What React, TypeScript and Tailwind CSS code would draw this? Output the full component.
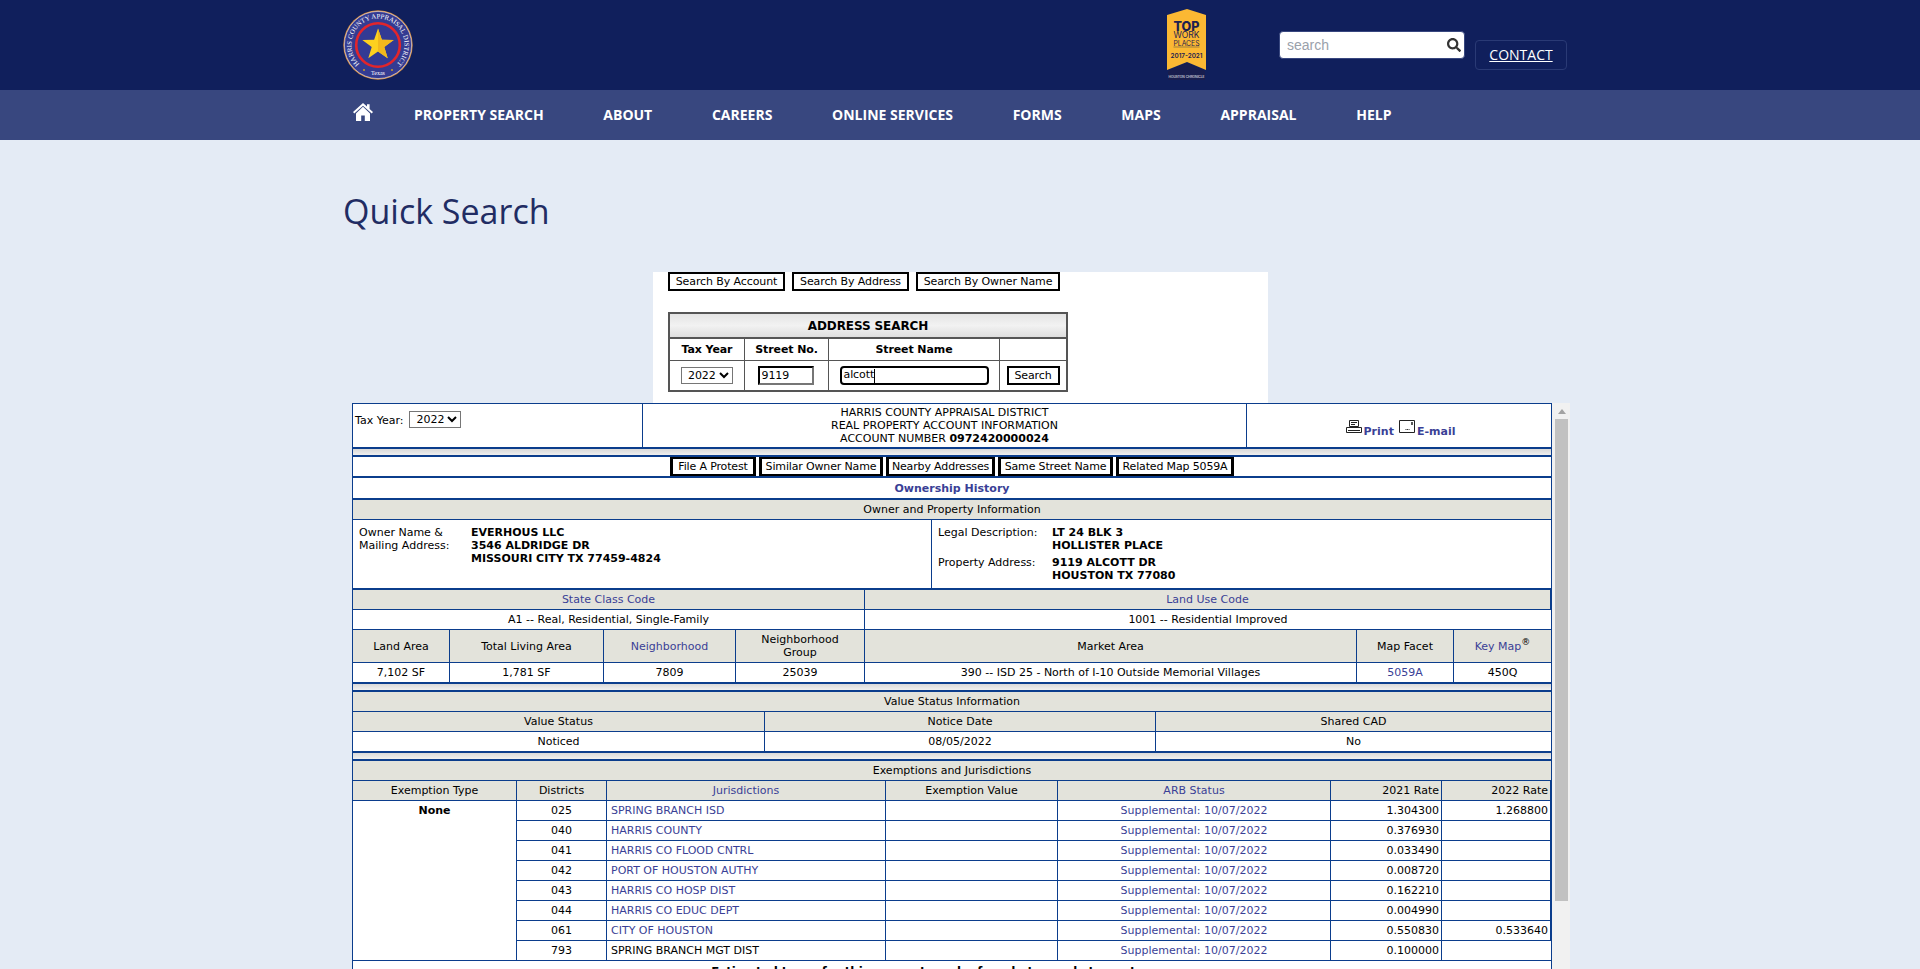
import * as React from "react"
import { FaSearch } from "react-icons/fa"

const navItems = ["PROPERTY SEARCH", "ABOUT", "CAREERS", "ONLINE SERVICES", "FORMS", "MAPS", "APPRAISAL", "HELP"]

const jurisdictions = [
  { id: "025", name: "SPRING BRANCH ISD", r21: "1.304300", r22: "1.268800", link: true },
  { id: "040", name: "HARRIS COUNTY", r21: "0.376930", r22: "", link: true },
  { id: "041", name: "HARRIS CO FLOOD CNTRL", r21: "0.033490", r22: "", link: true },
  { id: "042", name: "PORT OF HOUSTON AUTHY", r21: "0.008720", r22: "", link: true },
  { id: "043", name: "HARRIS CO HOSP DIST", r21: "0.162210", r22: "", link: true },
  { id: "044", name: "HARRIS CO EDUC DEPT", r21: "0.004990", r22: "", link: true },
  { id: "061", name: "CITY OF HOUSTON", r21: "0.550830", r22: "0.533640", link: true },
  { id: "793", name: "SPRING BRANCH MGT DIST", r21: "0.100000", r22: "", link: false },
]

function Logo() {
  return (
    <svg viewBox="0 0 70 70" className="h-[70px] w-[70px]">
      <circle cx="35" cy="35" r="34.7" fill="#d98a3a" />
      <circle cx="35" cy="35" r="33.6" fill="#343b92" stroke="#dfe3f2" strokeWidth="0.6" />
      <circle cx="35" cy="35" r="21.8" fill="#323a94" stroke="#e2252b" strokeWidth="2.6" />
      <path
        d="M35 18.5L38.88 29.66L50.69 29.9L41.28 37.04L44.7 48.35L35 41.6L25.3 48.35L28.72 37.04L19.31 29.9L31.12 29.66Z"
        fill="#fdd01f"
      />
      <path d="M35 18.5V41.6L44.7 48.35L41.28 37.04L50.69 29.9L38.88 29.66Z" fill="#f2b81c" />
      <defs>
        <path id="sealArc" d="M16.3 53.7A26.5 26.5 0 1 1 53.7 53.700" />
      </defs>
      <text fontFamily="'Liberation Serif', serif" fontSize="6.8" fill="#ffffff">
        <textPath href="#sealArc" startOffset="50%" textAnchor="middle">
          HARRIS COUNTY APPRAISAL DISTRICT
        </textPath>
      </text>
      <text x="35" y="64.500" textAnchor="middle" fontFamily="'Liberation Serif', serif" fontSize="6" fill="#ffffff">
        Texas
      </text>
      <circle cx="21" cy="60" r="1" fill="#c9a227" />
      <circle cx="49" cy="60" r="1" fill="#c9a227" />
    </svg>
  )
}

function Badge() {
  return (
    <svg viewBox="0 0 40 71" className="h-[71px] w-[40px]">
      <path d="M0 6L20 0L39 6V61L20 53L0 61Z" fill="#fbb833" />
      <path d="M1 62L20 54L38 62V71H1Z" fill="#181d4e" />
      <text x="19.5" y="21.600" textAnchor="middle" textLength="26" lengthAdjust="spacingAndGlyphs" fontFamily="Inter, sans-serif" fontWeight="800" fontSize="12.5" fill="#1c2150">
        TOP
      </text>
      <text x="19.5" y="29.300" textAnchor="middle" textLength="26" lengthAdjust="spacingAndGlyphs" fontFamily="Inter, sans-serif" fontSize="8.300" fill="#1c2150">
        WORK
      </text>
      <text x="19.5" y="36.500" textAnchor="middle" textLength="26" lengthAdjust="spacingAndGlyphs" fontFamily="Inter, sans-serif" fontSize="7" fill="#1c2150">
        PLACES
      </text>
      <rect x="6.5" y="37.600" width="26" height="0.800" fill="#8a7440" />
      <text x="19.5" y="49" textAnchor="middle" textLength="32" lengthAdjust="spacingAndGlyphs" fontFamily="Inter, sans-serif" fontSize="6.500" fontWeight="600" fill="#1c2150">
        2017-2021
      </text>
      <text x="19.5" y="69" textAnchor="middle" textLength="36" lengthAdjust="spacingAndGlyphs" fontFamily="Inter, sans-serif" fontSize="3.600" fill="#ffffff">
        HOUSTON CHRONICLE
      </text>
    </svg>
  )
}

function HomeIcon() {
  return (
    <svg viewBox="0 0 20 18" className="h-[18px] w-[20px]" fill="#ffffff">
      <path d="M10 0L14 3.600V1.200H16.600V6L20 9L18.700 10.400L10 2.800L1.300 10.400L0 9Z" />
      <path d="M3 10.400L10 3.800L17 10.400V18H11.800V12.500H8.200V18H3Z" />
    </svg>
  )
}

function PrintIcon() {
  return (
    <svg viewBox="0 0 17 14" className="h-[14px] w-[17px]" fill="none" stroke="#222222" strokeWidth="1">
      <path d="M3.500 .5h9v6h-9z" />
      <path d="M5 2.500h6M5 4.500h4" />
      <path d="M.5 7.500h15v5h-15z" />
      <path d="M2 10.500h12" />
    </svg>
  )
}

function MailIcon() {
  return (
    <svg viewBox="0 0 17 14" className="h-[14px] w-[17px]" fill="none" stroke="#222222" strokeWidth="1">
      <path d="M.5 .5h15v12h-15z" />
      <path d="M6.500 9.500h4" strokeDasharray="1 .6" />
      <path d="M13 2v3" strokeWidth="1.500" />
    </svg>
  )
}

function Cell({ children, className = "" }: { children?: React.ReactNode; className?: string }) {
  return (
    <div className={`flex items-center justify-center border-r border-b border-[#0b3d8c] last:border-r-0 ${className}`}>
      {children}
    </div>
  )
}

function Head({ children, link }: { children: React.ReactNode; link?: boolean }) {
  return <Cell className={`bg-[#e3e3db] ${link ? "text-[#3a3f96]" : ""}`}>{children}</Cell>
}

function SectionTitle({ children }: { children: React.ReactNode }) {
  return (
    <div className="flex h-[20px] items-center justify-center border-b border-[#0b3d8c] bg-[#e3e3db]">{children}</div>
  )
}

function Gap() {
  return <div className="h-[6px] bg-gradient-to-b from-[#d9d9d9] to-[#efefef]" />
}

function LinkButton({ children, className }: { children: React.ReactNode; className: string }) {
  return (
    <button
      className={`flex h-[19px] items-center justify-center border-[3px] border-y-2 border-black bg-white text-[11px] leading-none tracking-[-0.15px] text-black ${className}`}
    >
      {children}
    </button>
  )
}

function AccountDetail() {
  return (
    <div className="w-[1200px] border-x border-t border-[#0b3d8c] bg-white text-[11px] leading-[13px] text-black">
      <div className="grid h-[45px] grid-cols-[290px_604px_304px] border-b-2 border-[#0b3d8c]">
        <div className="flex items-start gap-[6px] border-r border-[#0b3d8c] pt-[7px] pl-[2px]">
          <span className="mt-[3px]">Tax Year:</span>
          <select
            defaultValue="2022"
            className="h-[17px] w-[52px] border border-[#767676] bg-white pl-[2px] text-[11px] leading-none"
          >
            <option>2022</option>
          </select>
        </div>
        <div className="flex flex-col items-center justify-center border-r border-[#0b3d8c] text-center">
          <span>HARRIS COUNTY APPRAISAL DISTRICT</span>
          <span>REAL PROPERTY ACCOUNT INFORMATION</span>
          <span>
            ACCOUNT NUMBER <b>0972420000024</b>
          </span>
        </div>
        <div className="flex items-center justify-center gap-[5px] pt-[2px] pl-[3px] font-bold text-[#3a3f96]">
          <span className="flex items-end gap-[1px]">
            <PrintIcon />
            <span className="translate-y-[4px]">Print</span>
          </span>
          <span className="flex items-end gap-[1px]">
            <MailIcon />
            <span className="translate-y-[4px]">E-mail</span>
          </span>
        </div>
      </div>
      <Gap />
      <div className="flex h-[23px] items-center justify-center gap-[3px] border-y-2 border-[#0b3d8c]">
        <LinkButton className="w-[86px]">File A Protest</LinkButton>
        <LinkButton className="w-[124px]">Similar Owner Name</LinkButton>
        <LinkButton className="w-[109px]">Nearby Addresses</LinkButton>
        <LinkButton className="w-[115px]">Same Street Name</LinkButton>
        <LinkButton className="w-[118px]">Related Map 5059A</LinkButton>
      </div>
      <div className="flex h-[22px] items-center justify-center border-b-2 border-[#0b3d8c] font-bold text-[#3a3f96]">
        Ownership History
      </div>
      <SectionTitle>Owner and Property Information</SectionTitle>
      <div className="grid h-[70px] grid-cols-[579px_619px] border-b-2 border-[#0b3d8c]">
        <div className="flex border-r border-[#0b3d8c] pt-[6px] pl-[6px]">
          <div className="w-[112px]">
            Owner Name &amp;
            <br />
            Mailing Address:
          </div>
          <div className="font-bold">
            EVERHOUS LLC
            <br />
            3546 ALDRIDGE DR
            <br />
            MISSOURI CITY TX 77459-4824
          </div>
        </div>
        <div className="flex pt-[6px] pl-[6px]">
          <div className="w-[114px]">
            <div className="h-[30px]">Legal Description:</div>
            <div>Property Address:</div>
          </div>
          <div className="font-bold">
            <div className="h-[30px]">
              LT 24 BLK 3
              <br />
              HOLLISTER PLACE
            </div>
            <div>
              9119 ALCOTT DR
              <br />
              HOUSTON TX 77080
            </div>
          </div>
        </div>
      </div>
      <div className="grid auto-rows-[20px] grid-cols-[512px_686px]">
        <Head link>State Class Code</Head>
        <Head link>Land Use Code</Head>
        <Cell>A1 -- Real, Residential, Single-Family</Cell>
        <Cell>1001 -- Residential Improved</Cell>
      </div>
      <div className="grid h-[33px] grid-cols-[97px_154px_132px_129px_492px_97px_97px]">
        <Head>Land Area</Head>
        <Head>Total Living Area</Head>
        <Head link>Neighborhood</Head>
        <Head>
          <span className="text-center">
            Neighborhood
            <br />
            Group
          </span>
        </Head>
        <Head>Market Area</Head>
        <Head>Map Facet</Head>
        <Head link>
          <span>
            Key Map<sup className="text-[9px] text-black">®</sup>
          </span>
        </Head>
      </div>
      <div className="grid h-[21px] grid-cols-[97px_154px_132px_129px_492px_97px_97px] border-b-2 border-[#0b3d8c] [&>div]:border-b-0">
        <Cell>7,102 SF</Cell>
        <Cell>1,781 SF</Cell>
        <Cell>7809</Cell>
        <Cell>25039</Cell>
        <Cell>390 -- ISD 25 - North of I-10 Outside Memorial Villages</Cell>
        <Cell className="text-[#3a3f96]">5059A</Cell>
        <Cell>450Q</Cell>
      </div>
      <Gap />
      <div className="border-t-2 border-[#0b3d8c]">
        <SectionTitle>Value Status Information</SectionTitle>
      </div>
      <div className="grid h-[20px] grid-cols-[412px_391px_395px]">
        <Head>Value Status</Head>
        <Head>Notice Date</Head>
        <Head>Shared CAD</Head>
      </div>
      <div className="grid h-[21px] grid-cols-[412px_391px_395px] border-b-2 border-[#0b3d8c] [&>div]:border-b-0">
        <Cell>Noticed</Cell>
        <Cell>08/05/2022</Cell>
        <Cell>No</Cell>
      </div>
      <Gap />
      <div className="border-t-2 border-[#0b3d8c]">
        <SectionTitle>Exemptions and Jurisdictions</SectionTitle>
      </div>
      <div className="grid auto-rows-[20px] grid-cols-[164px_90px_279px_172px_273px_111px_109px]">
        <Head>Exemption Type</Head>
        <Head>Districts</Head>
        <Head link>Jurisdictions</Head>
        <Head>Exemption Value</Head>
        <Head link>ARB Status</Head>
        <Cell className="justify-end bg-[#e3e3db] pr-[2px]">2021 Rate</Cell>
        <Cell className="justify-end bg-[#e3e3db] pr-[2px]">2022 Rate</Cell>
        <div className="row-span-8 flex justify-center border-r border-b border-[#0b3d8c] pt-[3px] font-bold">
          None
        </div>
        {jurisdictions.map((j) => (
          <React.Fragment key={j.id}>
            <Cell>{j.id}</Cell>
            <Cell className={`justify-start pl-[4px] ${j.link ? "text-[#3a3f96]" : ""}`}>{j.name}</Cell>
            <Cell />
            <Cell className="text-[#3a3f96]">Supplemental: 10/07/2022</Cell>
            <Cell className="justify-end pr-[2px]">{j.r21}</Cell>
            <Cell className="justify-end pr-[2px]">{j.r22}</Cell>
          </React.Fragment>
        ))}
      </div>
      <div className="h-[30px] pt-[5px] pr-[57px] text-center text-[11.700px] font-bold">
        Estimated taxes for this account can be found at www.hctax.net
      </div>
    </div>
  )
}

export default function App() {
  return (
    <div className="flex h-screen flex-col overflow-hidden bg-[#e4ebf5] font-['Open_Sans',sans-serif]">
      <header className="h-[90px] shrink-0 bg-[#101f5c]">
        <div className="mx-auto flex h-full w-[1234px]">
          <div className="pt-[10px]">
            <Logo />
          </div>
          <div className="mt-[9px] ml-auto">
            <Badge />
          </div>
          <div className="relative mt-[31px] ml-[72px] h-[28px] w-[186px]">
            <input
              placeholder="search"
              className="h-full w-full rounded-[4px] border border-[#38477f] bg-white pl-[7px] font-['Liberation_Sans',sans-serif] text-[14px] placeholder:text-[#9aa1ab]"
            />
            <FaSearch className="absolute top-[7px] right-[4px] h-[14px] w-[14px] text-[#333333]" />
          </div>
          <a className="mt-[40px] mr-[10px] ml-[10px] flex h-[30px] w-[92px] items-center justify-center rounded-[4px] border border-[#2a3a75] pb-[2px] text-[14px] text-white underline">
            CONTACT
          </a>
        </div>
      </header>
      <nav className="h-[50px] shrink-0 bg-[#38477f]">
        <div className="mx-auto flex h-full w-[1234px] items-center gap-[41px] pb-[2px] pl-[10px]">
          <a className="-mt-[4px]">
            <HomeIcon />
          </a>
          <div className="flex gap-[59.700px]">
            {navItems.map((item) => (
              <a key={item} className="text-[14px] font-bold text-white">
                {item}
              </a>
            ))}
          </div>
        </div>
      </nav>
      <main className="mx-auto w-[1234px]">
        <h1 className="mt-[47px] h-[85px] text-[34px] leading-[49px] font-normal text-[#212c63]">Quick Search</h1>
        <div className="ml-[310px] h-[131px] w-[615px] bg-white pl-[15px] font-['DejaVu_Sans',sans-serif] text-[11px] tracking-[-0.1px] text-black">
          <div className="flex gap-[7px]">
            <button className="h-[19px] w-[117px] border-2 border-black bg-white">Search By Account</button>
            <button className="h-[19px] w-[117px] border-2 border-black bg-white">Search By Address</button>
            <button className="h-[19px] w-[144px] border-2 border-black bg-white">Search By Owner Name</button>
          </div>
          <div className="mt-[21px] w-[400px] border-2 border-[#555555]">
            <div className="flex h-[23px] items-center justify-center bg-gradient-to-b from-[#e4e4e4] via-[#f2f2f2] to-[#dedede] text-[12px] font-bold">
              ADDRESS SEARCH
            </div>
            <div className="grid grid-cols-[75px_84px_171px_66px] border-t-2 border-[#555555]">
              <div className="flex h-[21px] items-center justify-center border-r border-[#555555] pt-[1px] font-bold">Tax Year</div>
              <div className="flex items-center justify-center border-r border-[#555555] pt-[1px] font-bold">Street No.</div>
              <div className="flex items-center justify-center border-r border-[#555555] pt-[1px] font-bold">Street Name</div>
              <div />
            </div>
            <div className="grid h-[30px] grid-cols-[75px_84px_171px_66px] border-t border-[#555555]">
              <div className="flex items-center justify-center border-r border-[#555555]">
                <select defaultValue="2022" className="h-[17px] w-[52px] border border-[#767676] bg-white pl-[2px] text-[11px]">
                  <option>2022</option>
                </select>
              </div>
              <div className="flex items-center justify-center border-r border-[#555555] pr-[2px]">
                <input
                  defaultValue="9119"
                  className="h-[19px] w-[56px] border-2 border-[#767676] border-t-black border-l-black bg-white pl-[2px] text-[11px]"
                />
              </div>
              <div className="flex items-center justify-center border-r border-[#555555]">
                <div className="flex h-[19px] w-[149px] items-center rounded-[4px] border-2 border-black pl-[2px]">
                  alcott<span className="h-[14px] w-px bg-black" />
                </div>
              </div>
              <div className="flex items-center justify-center">
                <button className="h-[19px] w-[53px] border-2 border-black bg-white">Search</button>
              </div>
            </div>
          </div>
        </div>
        <div className="ml-[9px] flex font-['DejaVu_Sans',sans-serif]">
          <AccountDetail />
          <div className="w-[18px] shrink-0 bg-[#f1f1f1] pl-[3px]">
            <div className="flex h-[16px] w-[13px] items-center justify-center">
              <span className="h-0 w-0 border-x-[4px] border-b-[5px] border-x-transparent border-b-[#a3a3a3]" />
            </div>
            <div className="h-[482px] w-[13px] bg-[#c1c1c1]" />
          </div>
        </div>
      </main>
    </div>
  )
}
